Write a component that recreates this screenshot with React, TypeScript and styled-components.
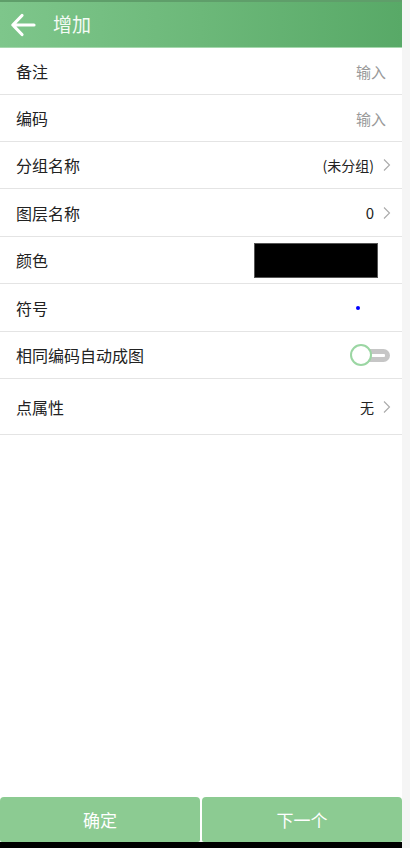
import React from "react";
import styled, { createGlobalStyle } from "styled-components";

const Global = createGlobalStyle`
  html, body { margin: 0; padding: 0; background: #f5f5f5; }
  body { font-family: "Noto Sans CJK SC", "Noto Sans", sans-serif; }
  * { box-sizing: border-box; }
`;

const Page = styled.div`
  display: flex;
  width: 410px;
  height: 848px;
  background: #f5f5f5;
`;

const Main = styled.div`
  width: 402px;
  height: 848px;
  display: flex;
  flex-direction: column;
  background: #fff;
`;

const Header = styled.div`
  height: 48px;
  display: flex;
  align-items: center;
  padding-left: 9px;
  gap: 16px;
  background: linear-gradient(90deg, #7ec68b 0%, #6cb879 50%, #58a967 100%);
  border-top: 2px solid #5f9e6a;
  border-bottom: 1px solid #a5d8ad;
  color: #fff;
`;

const Title = styled.span`
  font-size: 19px;
  color: #f4fbf5;
  margin-top: -3px;
`;

const Row = styled.div<{ $h?: number }>`
  height: ${(p) => p.$h ?? 47}px;
  display: flex;
  align-items: center;
  justify-content: space-between;
  padding: 0 16px;
  border-bottom: 1px solid #e4e4e4;
`;

const Label = styled.span`
  font-size: 16px;
  color: #222;
`;

const Right = styled.div`
  display: flex;
  align-items: center;
  gap: 9px;
  margin-right: -5px;
`;

const Hint = styled.span`
  font-size: 15px;
  color: #999;
`;

const Value = styled.span<{ $size?: number }>`
  font-size: ${(p) => p.$size ?? 14}px;
  color: #222;
`;

const ColorBox = styled.div`
  width: 124px;
  height: 35px;
  background: #000;
  border: 1px solid #555;
  margin-right: 8px;
`;

const Dot = styled.div`
  width: 4px;
  height: 4px;
  border-radius: 50%;
  background: #0000ff;
  margin-right: 26px;
`;

const Toggle = styled.div`
  position: relative;
  width: 40px;
  height: 22px;
  margin-right: -4px;
`;

const Track = styled.div`
  position: absolute;
  left: 10px;
  top: 5px;
  width: 30px;
  height: 13px;
  border-radius: 7px;
  background: #c6c6c6;
  display: flex;
  align-items: center;
  justify-content: flex-end;
  padding-right: 5px;
`;

const Dash = styled.div`
  width: 14px;
  height: 3px;
  background: #fff;
  border-radius: 1px;
`;

const Knob = styled.div`
  position: absolute;
  left: 0;
  top: 0;
  width: 22px;
  height: 22px;
  border-radius: 50%;
  background: #fff;
  border: 2px solid #9bd6a3;
`;

const Spacer = styled.div`
  flex: 1;
`;

const Footer = styled.div`
  display: flex;
  gap: 2px;
  height: 45px;
`;

const Button = styled.button`
  flex: 1;
  border: none;
  border-radius: 4px 4px 2px 2px;
  background: #8ccb92;
  color: #fff;
  font-family: "Noto Sans CJK SC", "Noto Sans", sans-serif;
  font-size: 17px;
  padding: 0;
`;

const Bottom = styled.div`
  height: 6px;
  background: #000;
`;

const Chevron = () => (
  <svg width="8" height="14" viewBox="0 0 8 14">
    <path d="M1 1.5 L6.5 7 L1 12.5" fill="none" stroke="#aaa" strokeWidth="1.1" />
  </svg>
);

const Arrow = () => (
  <svg width="28" height="28" viewBox="0 0 28 28">
    <path d="M25 14 H4 M13 4.5 L3.8 14 L13 23.5" fill="none" stroke="#fff" strokeWidth="3.2" strokeLinecap="round" strokeLinejoin="round" />
  </svg>
);

export default function App() {
  return (
    <>
      <Global />
      <Page>
        <Main>
          <Header>
            <Arrow />
            <Title>增加</Title>
          </Header>
          <Row>
            <Label>备注</Label>
            <Hint>输入</Hint>
          </Row>
          <Row>
            <Label>编码</Label>
            <Hint>输入</Hint>
          </Row>
          <Row>
            <Label>分组名称</Label>
            <Right>
              <Value>(未分组)</Value>
              <Chevron />
            </Right>
          </Row>
          <Row $h={48}>
            <Label>图层名称</Label>
            <Right>
              <Value $size={15}>0</Value>
              <Chevron />
            </Right>
          </Row>
          <Row>
            <Label>颜色</Label>
            <ColorBox />
          </Row>
          <Row $h={48}>
            <Label>符号</Label>
            <Dot />
          </Row>
          <Row>
            <Label>相同编码自动成图</Label>
            <Toggle>
              <Track>
                <Dash />
              </Track>
              <Knob />
            </Toggle>
          </Row>
          <Row $h={56}>
            <Label>点属性</Label>
            <Right>
              <Value>无</Value>
              <Chevron />
            </Right>
          </Row>
          <Spacer />
          <Footer>
            <Button>确定</Button>
            <Button>下一个</Button>
          </Footer>
          <Bottom />
        </Main>
      </Page>
    </>
  );
}
